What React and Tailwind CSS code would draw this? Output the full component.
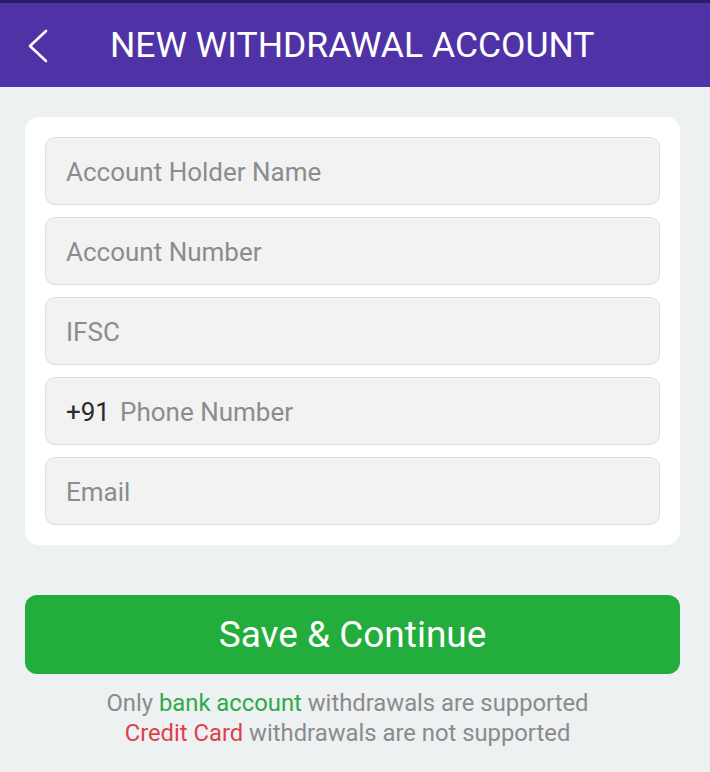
const fields = [
    { placeholder: "Account Holder Name" },
    { placeholder: "Account Number" },
    { placeholder: "IFSC" },
    { placeholder: "Phone Number", prefix: "+91" },
    { placeholder: "Email" },
];

const Field = ({ placeholder, prefix }) => {
    return (
        <div className="h-[68px] flex items-center px-5 pt-[3px] bg-[#f2f2f2] border-[1.5px] border-[#dedede] rounded-[10px] text-[26px]">
            {prefix && <span className="text-[#2a2a2a] mr-[10px]">{prefix}</span>}
            <span className="text-[#8c8c8c]">{placeholder}</span>
        </div>
    );
}

const App = () => {
    return (
        <div className="w-[710px] h-[772px] bg-[#edf1f2] font-['Roboto',sans-serif] overflow-hidden">
            <div className="h-[87px] bg-[#4f33a6] border-t-[3px] border-[#2b1d6e] flex items-center">
                <div className="w-[110px] pl-[28px] pt-[2px]">
                    <svg width="20" height="34" viewBox="0 0 20 34" fill="none" stroke="white" strokeWidth="2.6" strokeLinecap="round" strokeLinejoin="round">
                        <polyline points="18,2 2,17 18,32" />
                    </svg>
                </div>
                <h1 className="text-white text-[35.5px] leading-none pt-[2px]">NEW WITHDRAWAL ACCOUNT</h1>
            </div>

            <div className="pl-[25px] pr-[30px] pt-[30px]">
                <div className="bg-white rounded-[14px] px-5 py-5 flex flex-col gap-3">
                    {
                        fields.map(f =>
                            <Field key={f.placeholder} {...f} />
                        )
                    }
                </div>

                <button className="mt-[50px] w-full h-[79px] rounded-[12px] bg-[#22ad3d] text-white text-[37px]">
                    Save &amp; Continue
                </button>

                <div className="mt-[14px] pr-[10px] text-center text-[23.8px] leading-[30px] text-[#8b8b8b]">
                    <p>Only <span className="text-[#2eab48]">bank account</span> withdrawals are supported</p>
                    <p><span className="text-[#e0404a]">Credit Card</span> withdrawals are not supported</p>
                </div>
            </div>
        </div>
    );
}

export default App;
